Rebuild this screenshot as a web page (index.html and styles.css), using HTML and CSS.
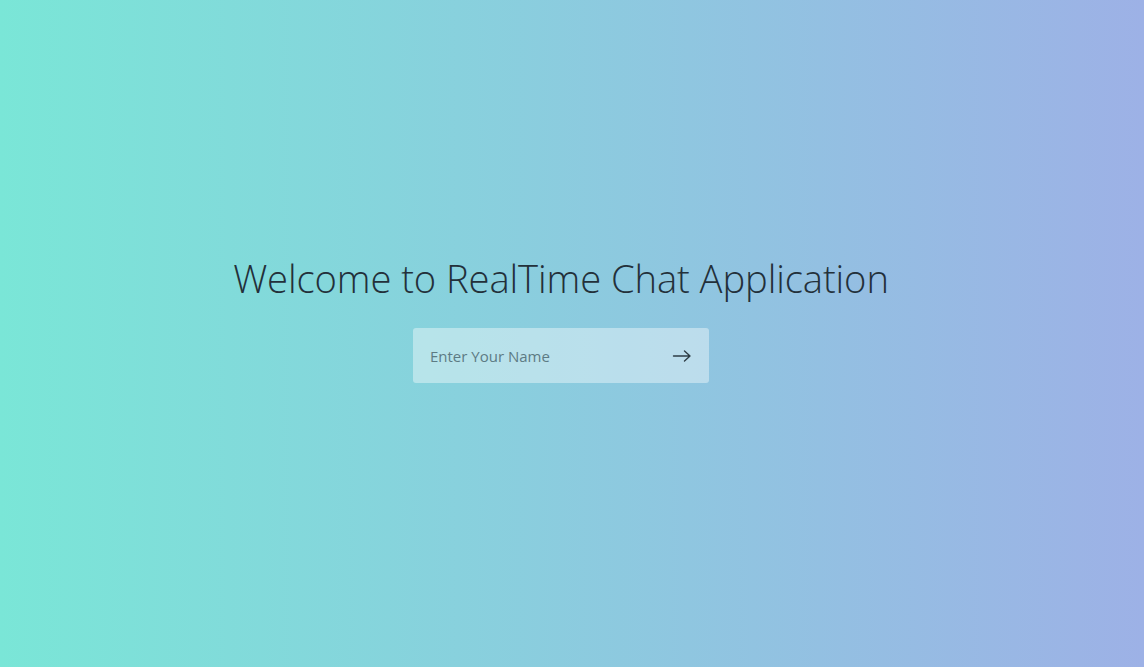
FILE: index.html
```html
<!DOCTYPE html>
<html lang="en">
<head>
<meta charset="utf-8">
<title>RealTime Chat</title>
<link rel="stylesheet" href="styles.css">
</head>
<body>
<main class="page">
  <div class="join">
    <h1 class="title">Welcome to RealTime Chat Application</h1>
    <form class="name-form">
      <input class="name-input" type="text" placeholder="Enter Your Name">
      <button class="go" type="button" aria-label="Join">
        <svg width="20" height="14" viewBox="0 0 20 14" fill="none" stroke="#2e3d45" stroke-width="1.4" stroke-linecap="round" stroke-linejoin="round"><path d="M1.5 7h16.5M12.5 2L18 7l-5.5 5"/></svg>
      </button>
    </form>
  </div>
</main>
</body>
</html>
```
FILE: styles.css
```css
* { box-sizing: border-box; }
html, body { margin: 0; height: 100%; }
body {
  background: linear-gradient(to right, #7ae6d7, #9db1e6);
  font-family: "Open Sans", "Noto Sans", sans-serif;
}
.page {
  height: 667px;
  display: flex;
  align-items: flex-start;
  justify-content: center;
  padding-right: 22px;
  padding-top: 251px;
}
.join {
  display: flex;
  flex-direction: column;
  align-items: center;
}
.title {
  margin: 0;
  font-weight: 300;
  font-size: 38.2px;
  line-height: 55px;
  color: #23303a;
  letter-spacing: -0.1px;
}
.name-form {
  margin-top: 22px;
  width: 296px;
  height: 55px;
  display: flex;
  align-items: center;
  background: rgba(255, 255, 255, 0.4);
  border-radius: 3px;
  padding: 0 17px 0 17px;
}
.name-input {
  flex: 1;
  border: 0;
  background: transparent;
  outline: none;
  font-family: "Open Sans", "Noto Sans", sans-serif;
  font-size: 15px;
  color: #333;
  padding: 0;
}
.name-input::placeholder { color: #5d7b84; }
.go {
  border: 0;
  background: transparent;
  padding: 0;
  display: flex;
  align-items: center;
  cursor: pointer;
}
```
